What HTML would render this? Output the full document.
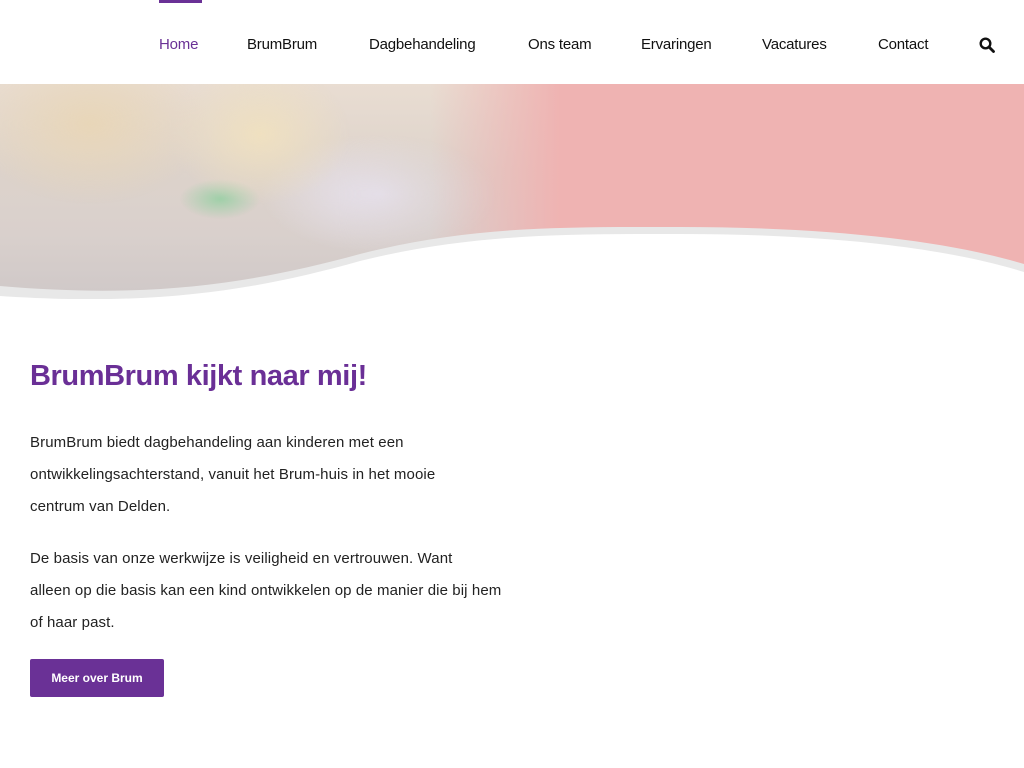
<!DOCTYPE html>
<html><head><meta charset="utf-8"><style>
body{margin:0;width:1024px;height:768px;overflow:hidden;background:#fff;font-family:"Liberation Sans",sans-serif;position:relative}
.nav{position:absolute;top:0;left:0;width:1024px;height:84px}
.nav a{position:absolute;top:36px;font-size:15px;color:#111;text-decoration:none;letter-spacing:-0.2px}
.bar{position:absolute;left:159px;top:0;width:43px;height:3px;background:#6a3196}
.hero{position:absolute;top:84px;left:0;width:1024px;height:215px;overflow:hidden;
background:linear-gradient(90deg,rgba(239,179,178,0) 0px,rgba(239,179,178,0) 430px,#efb3b2 560px),
linear-gradient(180deg,#e9ddd2 0%,#ddd3cb 40%,#d9d0cc 70%,#cfc8c8 100%);}
.img{position:absolute;left:0;top:0;width:560px;height:215px;
background:radial-gradient(ellipse 120px 80px at 90px 40px,#e8d6b8,transparent),
radial-gradient(ellipse 90px 70px at 260px 50px,#efe0c0,transparent),
radial-gradient(ellipse 120px 60px at 380px 110px,#e6e1ee,transparent),
radial-gradient(ellipse 40px 20px at 220px 115px,#9fcfa8,transparent);
-webkit-mask:linear-gradient(90deg,#000 60%,transparent 100%)}
h1{position:absolute;left:30px;top:360px;margin:0;font-size:29px;color:#6a2f96;font-weight:bold;letter-spacing:-0.4px}
p{position:absolute;left:30px;margin:0;font-size:15px;line-height:32px;color:#222;white-space:nowrap;letter-spacing:0.1px}
.btn{position:absolute;left:30px;top:659px;width:134px;height:38px;background:#6a3196;color:#fff;font-size:12px;font-weight:bold;text-align:center;line-height:38px;border-radius:2px}
</style></head><body>
<div class="nav">
<div class="bar"></div>
<a style="left:159px;color:#6a3196">Home</a>
<a style="left:247px">BrumBrum</a>
<a style="left:369px">Dagbehandeling</a>
<a style="left:528px">Ons team</a>
<a style="left:641px">Ervaringen</a>
<a style="left:762px">Vacatures</a>
<a style="left:878px">Contact</a>
<svg style="position:absolute;left:979px;top:37px" width="16" height="16" viewBox="0 0 16 16"><circle cx="6.5" cy="6.5" r="4.8" fill="none" stroke="#111" stroke-width="2.4"/><path d="M10 10l4.5 4.5" stroke="#111" stroke-width="2.8" stroke-linecap="round"/></svg>
</div>
<div class="hero"><div class="img"></div>
<svg style="position:absolute;left:0;top:0" width="1024" height="215" viewBox="0 0 1024 215">
<path d="M0 202 C150 215 250 200 360 170 C470 142 560 143 680 143 C820 143 940 155 1024 180 L1024 215 L0 215Z" fill="#e8e8e8"/>
<path d="M0 212 C150 222 250 208 360 177 C470 150 560 150 680 150 C820 150 940 162 1024 188 L1024 215 L0 215Z" fill="#fff"/>
</svg></div>
<h1>BrumBrum kijkt naar mij!</h1>
<p style="top:427px">BrumBrum biedt dagbehandeling aan kinderen met een<br>ontwikkelingsachterstand, vanuit het Brum-huis in het mooie<br>centrum van Delden.</p>
<p style="top:543px">De basis van onze werkwijze is veiligheid en vertrouwen. Want<br>alleen op die basis kan een kind ontwikkelen op de manier die bij hem<br>of haar past.</p>
<div class="btn">Meer over Brum</div>
</body></html>
